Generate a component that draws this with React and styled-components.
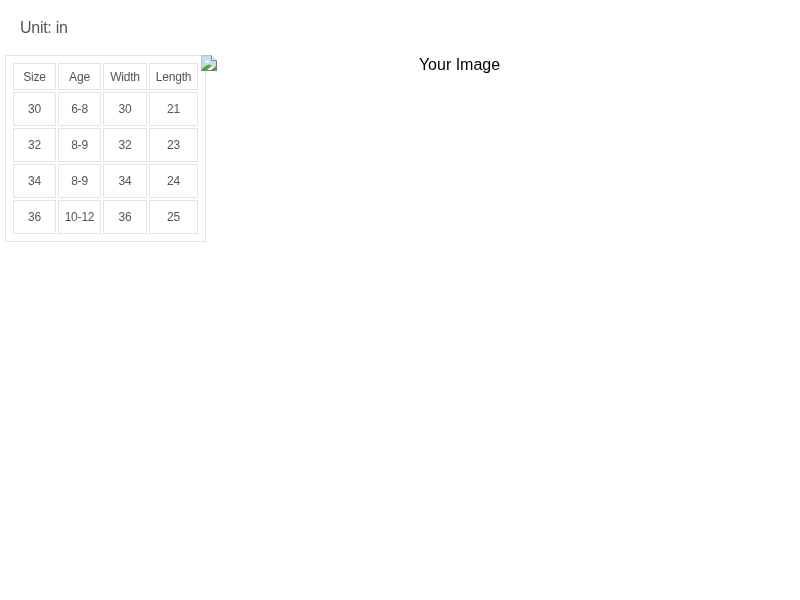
import React from 'react'
import styled, { createGlobalStyle } from 'styled-components'

const GlobalStyle = createGlobalStyle`
    body {
        margin: 0;
        background: #ffffff;
        font-family: "Liberation Sans", Arial, sans-serif;
    }
`;

const Page = styled.div`
    will-change: transform;
`;

const Unit = styled.div`
    height: 55px;
    padding: 19px 0 0 20px;
    box-sizing: border-box;
    font-size: 16px;
    line-height: 18px;
    letter-spacing: -0.28px;
    color: #555555;
`;

const Row = styled.div`
    display: flex;
    align-items: flex-start;
    padding-left: 5px;
`;

const SizeTable = styled.table`
    width: 201px;
    height: 187px;
    box-sizing: border-box;
    flex-shrink: 0;
    table-layout: fixed;
    border: 1px solid #e4e4e4;
    border-collapse: separate;
    border-spacing: 2px;
    padding: 5px;
    font-size: 12px;
    letter-spacing: -0.2px;
    color: #555555;
`;

const Cell = styled.td`
    box-sizing: border-box;
    width: ${(props) => props.$width}px;
    height: ${(props) => (props.$head ? 27 : 34)}px;
    padding: 0;
    border: 1px solid #e4e4e4;
    text-align: center;
    vertical-align: middle;
`;

const ImageBox = styled.div`
    display: flex;
    width: 501px;
    margin-left: -5px;
    position: relative;
    font-size: 16px;
    line-height: 18px;
    color: #000000;
`;

const AltText = styled.span`
    flex: 1;
    padding-top: 1px;
    text-align: center;
`;

const BrokenIcon = () => (
    <svg width="16" height="16" viewBox="0 0 16 16" style={{ flexShrink: 0 }}>
        <path d="M0.5 0.5H10.5L15.5 5.5V15.5H0.5Z" fill="#ffffff" stroke="#c0c0c0" />
        <path d="M0.5 15.5H15.5V6" fill="none" stroke="#787878" />
        <path d="M10.5 0.5V5.5H15.5" fill="#e8e8e8" stroke="#8c8c8c" />
        <path d="M1 1H10V6H15V11L1 15Z" fill="#c2dcf6" />
        <path d="M4 6.5C5.5 5 8 5 9 7C7 8 5 8 4 6.5Z" fill="#ffffff" />
        <path d="M1 15V14C3.5 11.5 6 10 8 9.5L11 10.5L6 15Z" fill="#4fa82e" />
        <path d="M10 15L15 11V15Z" fill="#4fa82e" />
    </svg>
);

const columns = [43, 43, 44, 49];
const head = ['Size', 'Age', 'Width', 'Length'];
const rows = [
    ['30', '6-8', '30', '21'],
    ['32', '8-9', '32', '23'],
    ['34', '8-9', '34', '24'],
    ['36', '10-12', '36', '25'],
];

const App = () => {
    return (
        <Page>
            <GlobalStyle />
            <Unit>Unit: in</Unit>
            <Row>
                <SizeTable>
                    <tbody>
                        <tr>
                            {head.map((label, i) => (
                                <Cell key={label} $head $width={columns[i]}>{label}</Cell>
                            ))}
                        </tr>
                        {rows.map((row, r) => (
                            <tr key={r}>
                                {row.map((value, i) => (
                                    <Cell key={i} $width={columns[i]}>{value}</Cell>
                                ))}
                            </tr>
                        ))}
                    </tbody>
                </SizeTable>
                <ImageBox>
                    <BrokenIcon />
                    <AltText>Your Image</AltText>
                </ImageBox>
            </Row>
        </Page>
    )
}

export default App
